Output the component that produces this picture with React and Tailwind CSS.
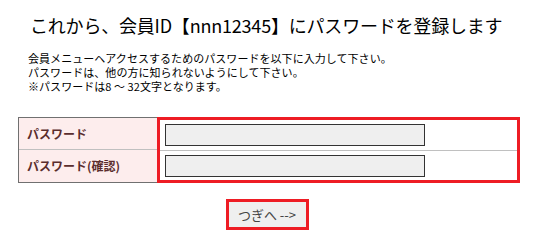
export default function App() {
  return (
    <div className="w-[550px] h-[231px] bg-white text-black" style={{ fontFamily: '"Noto Sans CJK JP", "Noto Sans", sans-serif' }}>
      <h1 className="pt-[16px] pl-[30px] text-[18px] leading-[18px] font-normal tracking-[-0.2px]">
        これから、会員ID【nnn12345】にパスワードを登録します
      </h1>

      <div className="mt-[17px] pl-[28px] text-[11px] leading-[14px] tracking-[0.05px]">
        <p>会員メニューヘアクセスするためのパスワードを以下に入力して下さい。</p>
        <p>パスワードは、他の方に知られないようにして下さい。</p>
        <p>※パスワードは8 ～ 32文字となります。</p>
      </div>

      {/* 入力テーブル */}
      <div className="mt-[24px] ml-[18px] flex w-[502px]">
        <div className="w-[139px] flex flex-col border-l border-t border-b border-[#707070] bg-[#fdeded] text-[12px] font-bold text-[#5a2d2d]">
          <div className="h-[32px] flex items-center pl-[8px] border-b border-[#c0c0c0]">パスワード</div>
          <div className="h-[31px] flex items-center pl-[8px]">パスワード(確認)</div>
        </div>
        <div className="flex-1 flex flex-col border-[3px] border-[#ee1c24]">
          <div className="h-[31px] flex items-center pl-[5px] border-b border-[#c0c0c0]">
            <input type="password" className="w-[260px] h-[22px] bg-[#efefef] border border-[#333333] outline-none" />
          </div>
          <div className="h-[29px] flex items-center pl-[5px]">
            <input type="password" className="w-[260px] h-[22px] bg-[#efefef] border border-[#333333] outline-none" />
          </div>
        </div>
      </div>

      <div className="mt-[16px] flex justify-center w-[550px] pr-[16px]">
        <button className="w-[83px] h-[31px] border-[3px] border-[#ee1c24] bg-[#efefef] text-[13px] leading-none text-[#444444]">
          つぎへ --&gt;
        </button>
      </div>
    </div>
  );
}
